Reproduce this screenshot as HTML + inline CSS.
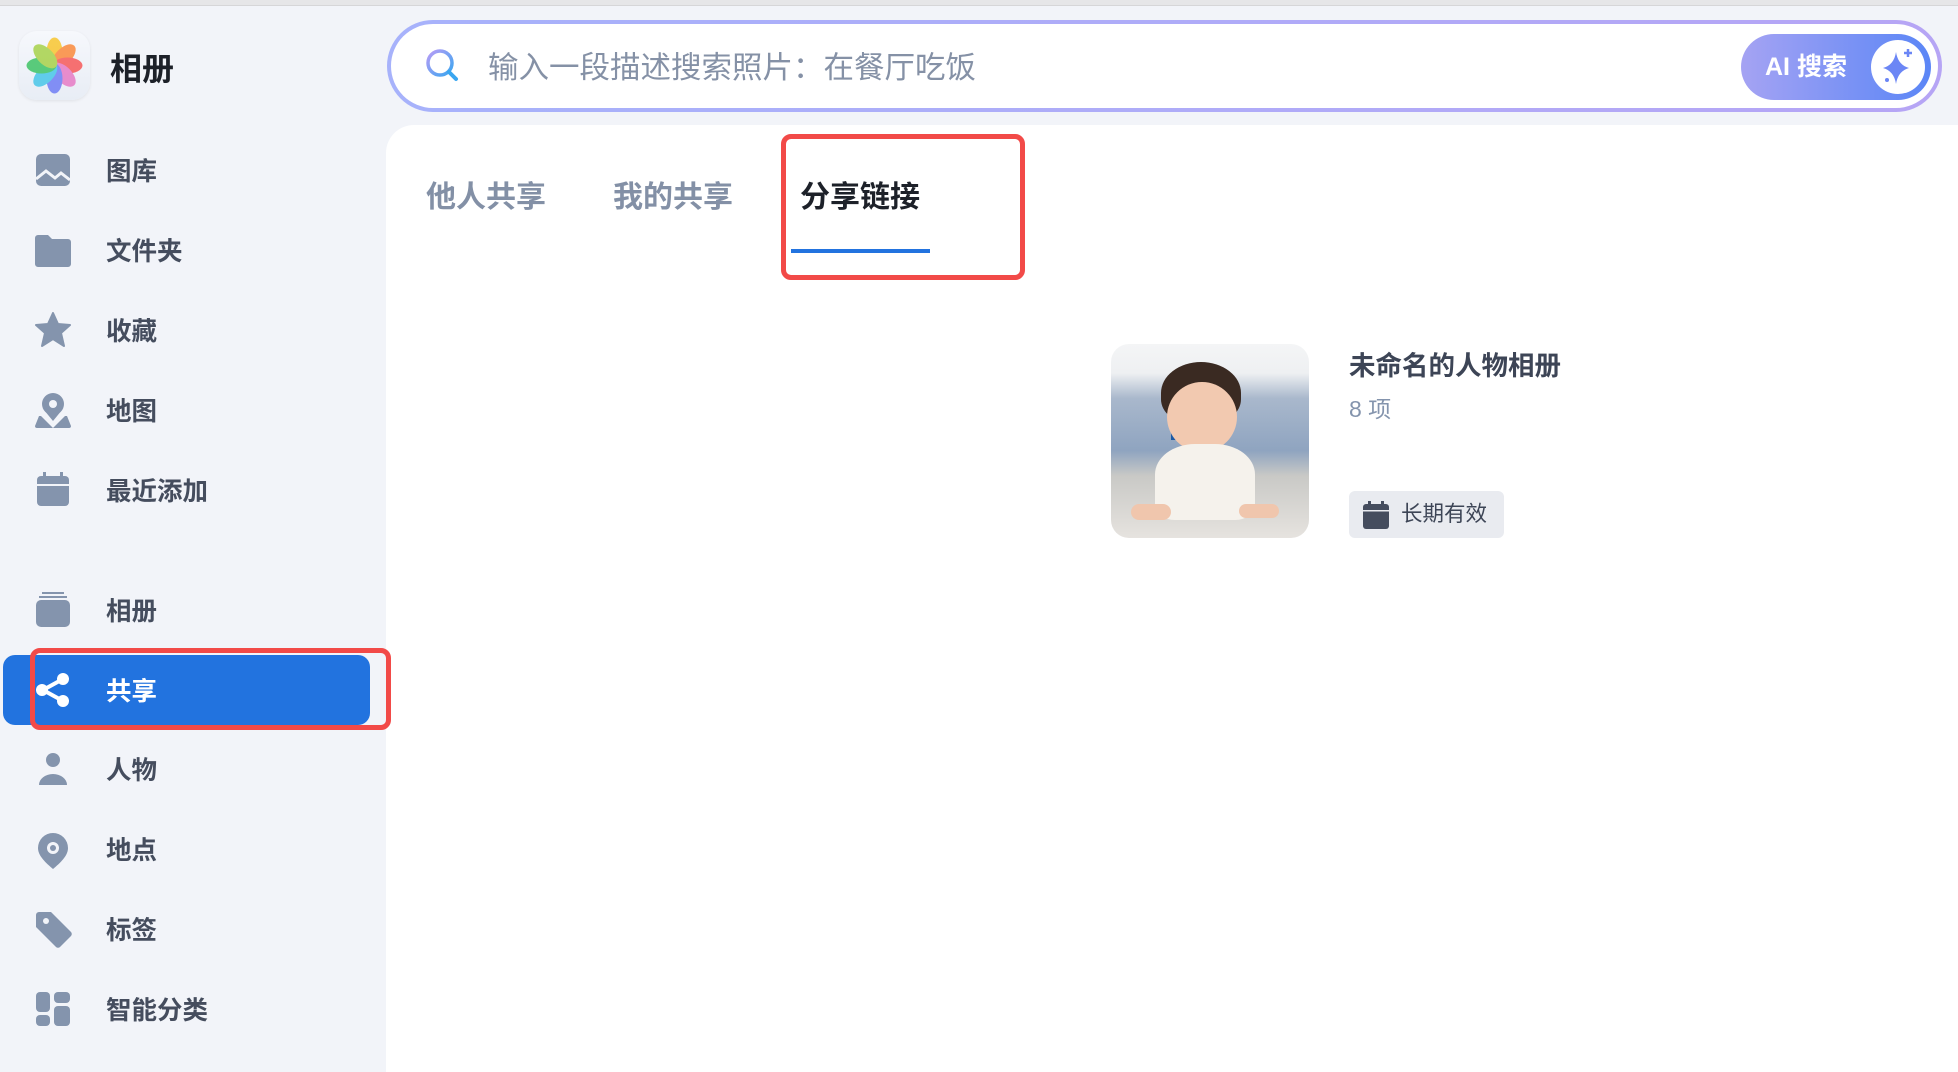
<!DOCTYPE html>
<html><head><meta charset="utf-8">
<style>
*{margin:0;padding:0;box-sizing:border-box}
body{width:1958px;height:1072px;background:#f2f4f9;font-family:"Liberation Sans","Noto Sans CJK SC",sans-serif;position:relative;overflow:hidden}
.top{position:absolute;left:0;top:0;width:1958px;height:6px;background:#e6e6e8;border-bottom:1px solid #d6d6d8}
.logo{position:absolute;left:19px;top:31px;width:71px;height:69px;border-radius:18px;background:linear-gradient(#f6f8fc,#e8edf5);box-shadow:0 1px 3px rgba(0,0,0,.08)}
.brand{position:absolute;left:110px;top:44px;font-size:32px;font-weight:bold;color:#1d2129}
.nav{position:absolute;left:0;width:386px;height:70px}
.nav svg{position:absolute;left:35px;top:17px}
.nav span{position:absolute;left:106px;top:2px;line-height:70px;font-size:25.5px;font-weight:bold;color:#454d5e}
.active{position:absolute;left:3px;top:655px;width:367px;height:70px;background:#2273df;border-radius:12px}
.red{position:absolute;border:5px solid #f24a48;border-radius:10px;z-index:5}
.search{position:absolute;left:387px;top:20px;width:1555px;height:92px;border-radius:46px;background:linear-gradient(90deg,#a7b2fb,#b6a5f5);padding:4px}
.search .in{width:100%;height:100%;background:#fff;border-radius:42px;position:relative}
.ph{position:absolute;left:97px;top:2px;line-height:84px;font-size:30.5px;color:#8591a6}
.ai{position:absolute;right:7px;top:10px;width:190px;height:66px;border-radius:33px;background:linear-gradient(90deg,#a5a3f3,#5b86f6)}
.ai span{position:absolute;left:24px;line-height:66px;color:#fff;font-size:25px;font-weight:bold}
.ai i{position:absolute;right:6px;top:6px;width:54px;height:54px;border-radius:50%;background:#fff}
.main{position:absolute;left:386px;top:125px;width:1572px;height:947px;background:#fff;border-top-left-radius:28px}
.tab{position:absolute;top:176px;font-size:30px;color:#8390a6;font-weight:bold;line-height:44px}
</style></head><body>
<div class="top"></div>
<div class="logo">
<svg width="71" height="69" viewBox="0 0 71 69">
<g transform="translate(35.5,34.5)" opacity=".85">
<ellipse rx="8" ry="15" cy="-13" fill="#f8c630"/>
<ellipse rx="8" ry="15" cy="-13" fill="#fb8b3c" transform="rotate(45)"/>
<ellipse rx="8" ry="15" cy="-13" fill="#f75a5a" transform="rotate(90)"/>
<ellipse rx="8" ry="15" cy="-13" fill="#e77bc5" transform="rotate(135)"/>
<ellipse rx="8" ry="15" cy="-13" fill="#6f7ef5" transform="rotate(180)"/>
<ellipse rx="8" ry="15" cy="-13" fill="#48c6e8" transform="rotate(225)"/>
<ellipse rx="8" ry="15" cy="-13" fill="#3fc466" transform="rotate(270)"/>
<ellipse rx="8" ry="15" cy="-13" fill="#a8d24a" transform="rotate(315)"/>
</g></svg></div>
<div class="brand">相册</div>

<div class="nav" style="top:135px"><svg width="36" height="36" viewBox="0 0 36 36"><rect x="1" y="2" width="34" height="32" rx="5" fill="#8494ad"/><path d="M1 27 L11 19 L20 26 L26 21 L35 28" stroke="#f2f4f9" stroke-width="3" fill="none"/></svg><span>图库</span></div>
<div class="nav" style="top:215px"><svg width="36" height="36" viewBox="0 0 36 36"><path d="M0 6 a3 3 0 0 1 3-3 h10 l4 4 h16 a3 3 0 0 1 3 3 v22 a3 3 0 0 1-3 3 h-30 a3 3 0 0 1-3-3z" fill="#8494ad"/></svg><span>文件夹</span></div>
<div class="nav" style="top:295px"><svg width="36" height="36" viewBox="0 0 36 36"><path d="M18 1 L23 12 L35 13 L26 21 L29 34 L18 27 L7 34 L10 21 L1 13 L13 12Z" fill="#8494ad" stroke="#8494ad" stroke-linejoin="round" stroke-width="2"/></svg><span>收藏</span></div>
<div class="nav" style="top:375px"><svg width="36" height="38" viewBox="0 0 36 38"><path d="M6 24 h-2 l-4 10 a2 2 0 0 0 2 2 h32 a2 2 0 0 0 2-2 l-4-10 h-2 l-12 12z" fill="#8494ad"/><circle cx="18" cy="12" r="11" fill="#8494ad"/><path d="M9 18 L18 29 L27 18Z" fill="#8494ad"/><circle cx="18" cy="12" r="4" fill="#f2f4f9"/></svg><span>地图</span></div>
<div class="nav" style="top:455px"><svg width="36" height="36" viewBox="0 0 36 36"><rect x="2" y="4" width="32" height="30" rx="4" fill="#8494ad"/><rect x="8" y="0" width="3" height="7" fill="#8494ad"/><rect x="25" y="0" width="3" height="7" fill="#8494ad"/><rect x="2" y="12" width="32" height="2" fill="#f2f4f9"/></svg><span>最近添加</span></div>
<div class="nav" style="top:575px"><svg width="36" height="36" viewBox="0 0 36 36"><rect x="7" y="0" width="22" height="2" fill="#8494ad"/><rect x="4" y="4" width="28" height="2" fill="#8494ad"/><rect x="1" y="8" width="34" height="27" rx="5" fill="#8494ad"/></svg><span>相册</span></div>

<div class="active"></div>
<div class="nav" style="top:655px"><svg width="36" height="36" viewBox="0 0 36 36"><path d="M28 7 L8 18 L28 29" stroke="#fff" stroke-width="4" fill="none"/><circle cx="28" cy="7" r="6" fill="#fff"/><circle cx="7" cy="18" r="6" fill="#fff"/><circle cx="28" cy="29" r="6" fill="#fff"/></svg><span style="color:#fff">共享</span></div>

<div class="nav" style="top:734px"><svg width="36" height="36" viewBox="0 0 36 36"><circle cx="18" cy="9" r="7" fill="#8494ad"/><path d="M4 34 a14 11 0 0 1 28 0z" fill="#8494ad"/></svg><span>人物</span></div>
<div class="nav" style="top:814px"><svg width="36" height="38" viewBox="0 0 36 38"><path d="M18 2 a15 15 0 0 1 15 15 c0 8-8 15-15 21 c-7-6-15-13-15-21 a15 15 0 0 1 15-15z" fill="#8494ad"/><circle cx="18" cy="17" r="6" fill="#f2f4f9"/><circle cx="18" cy="17" r="3" fill="#8494ad"/></svg><span>地点</span></div>
<div class="nav" style="top:894px"><svg width="38" height="38" viewBox="0 0 38 38"><path d="M1 4 a3 3 0 0 1 3-3 h12 l20 20 a3 3 0 0 1 0 4 l-11 11 a3 3 0 0 1-4 0 l-20-20z" fill="#8494ad"/><circle cx="11" cy="10" r="3" fill="#f2f4f9"/></svg><span>标签</span></div>
<div class="nav" style="top:974px"><svg width="36" height="36" viewBox="0 0 36 36"><rect x="1" y="1" width="14" height="20" rx="4" fill="#8494ad"/><rect x="1" y="24" width="14" height="11" rx="4" fill="#8494ad"/><rect x="19" y="1" width="16" height="11" rx="4" fill="#8494ad"/><rect x="19" y="15" width="16" height="20" rx="4" fill="#8494ad"/></svg><span>智能分类</span></div>

<div class="search"><div class="in">
<svg style="position:absolute;left:32px;top:22px" width="40" height="40" viewBox="0 0 40 40"><defs><linearGradient id="g" x1="0" x2="1" y1="0" y2="1"><stop offset="0" stop-color="#b79cf6"/><stop offset="1" stop-color="#3aa6f0"/></linearGradient></defs><circle cx="17" cy="17" r="12" stroke="url(#g)" stroke-width="3.5" fill="none"/><path d="M26 26 L33 33" stroke="#3aa6f0" stroke-width="4" stroke-linecap="round"/></svg>
<div class="ph">输入一段描述搜索照片：在餐厅吃饭</div>
<div class="ai"><span>AI 搜索</span><i><svg width="54" height="54" viewBox="0 0 54 54"><path d="M25 12 Q27 25 38 28 Q27 31 25 44 Q23 31 12 28 Q23 25 25 12Z" fill="#6b86f5"/><path d="M37 9 v8 M33 13 h8" stroke="#6b86f5" stroke-width="2.5"/><circle cx="16" cy="40" r="2" fill="#6b86f5"/></svg></i></div>
</div></div>

<div class="main"></div>
<div class="red" style="left:30px;top:648px;width:361px;height:82px"></div>
<div class="tab" style="left:426px">他人共享</div>
<div class="tab" style="left:613px">我的共享</div>
<div class="tab" style="left:800px;color:#1d2129">分享链接</div>
<div style="position:absolute;left:791px;top:249px;width:139px;height:4px;background:#2273df"></div>
<div class="red" style="left:781px;top:134px;width:244px;height:146px"></div>

<div style="position:absolute;left:1111px;top:344px;width:198px;height:194px;border-radius:18px;overflow:hidden;background:linear-gradient(#f4f5f6 0%,#eef0f2 15%,#a9b8cc 28%,#8fa4c0 55%,#c9c9c6 68%,#e6e3df 100%)">
<div style="position:absolute;left:60px;top:56px;width:20px;height:40px;background:#1d5aa5"></div>
<div style="position:absolute;left:50px;top:18px;width:80px;height:62px;border-radius:50% 50% 40% 40%;background:#3a2a22"></div>
<div style="position:absolute;left:56px;top:38px;width:70px;height:70px;border-radius:50%;background:#f2c9b0"></div>
<div style="position:absolute;left:44px;top:100px;width:100px;height:76px;border-radius:40% 40% 20% 20%;background:#f5f2ec"></div>
<div style="position:absolute;left:20px;top:160px;width:40px;height:16px;border-radius:8px;background:#f0c6ad"></div>
<div style="position:absolute;left:128px;top:160px;width:40px;height:14px;border-radius:8px;background:#f0c6ad"></div>
</div>
<div style="position:absolute;left:1349px;top:344px;font-size:26.5px;color:#3d4556;font-weight:bold">未命名的人物相册</div>
<div style="position:absolute;left:1349px;top:390px;font-size:23px;color:#8494ad">8 项</div>
<div style="position:absolute;left:1349px;top:491px;width:155px;height:47px;border-radius:6px;background:#e9ebf0">
<svg style="position:absolute;left:14px;top:10px" width="26" height="28" viewBox="0 0 26 28"><rect x="0" y="3" width="26" height="25" rx="3" fill="#454d5e"/><rect x="5" y="0" width="3" height="6" fill="#454d5e"/><rect x="18" y="0" width="3" height="6" fill="#454d5e"/><rect x="0" y="9" width="26" height="1.5" fill="#e9ebf0"/></svg>
<span style="position:absolute;left:52px;line-height:47px;font-size:21.5px;color:#3d4556">长期有效</span></div>
</body></html>
